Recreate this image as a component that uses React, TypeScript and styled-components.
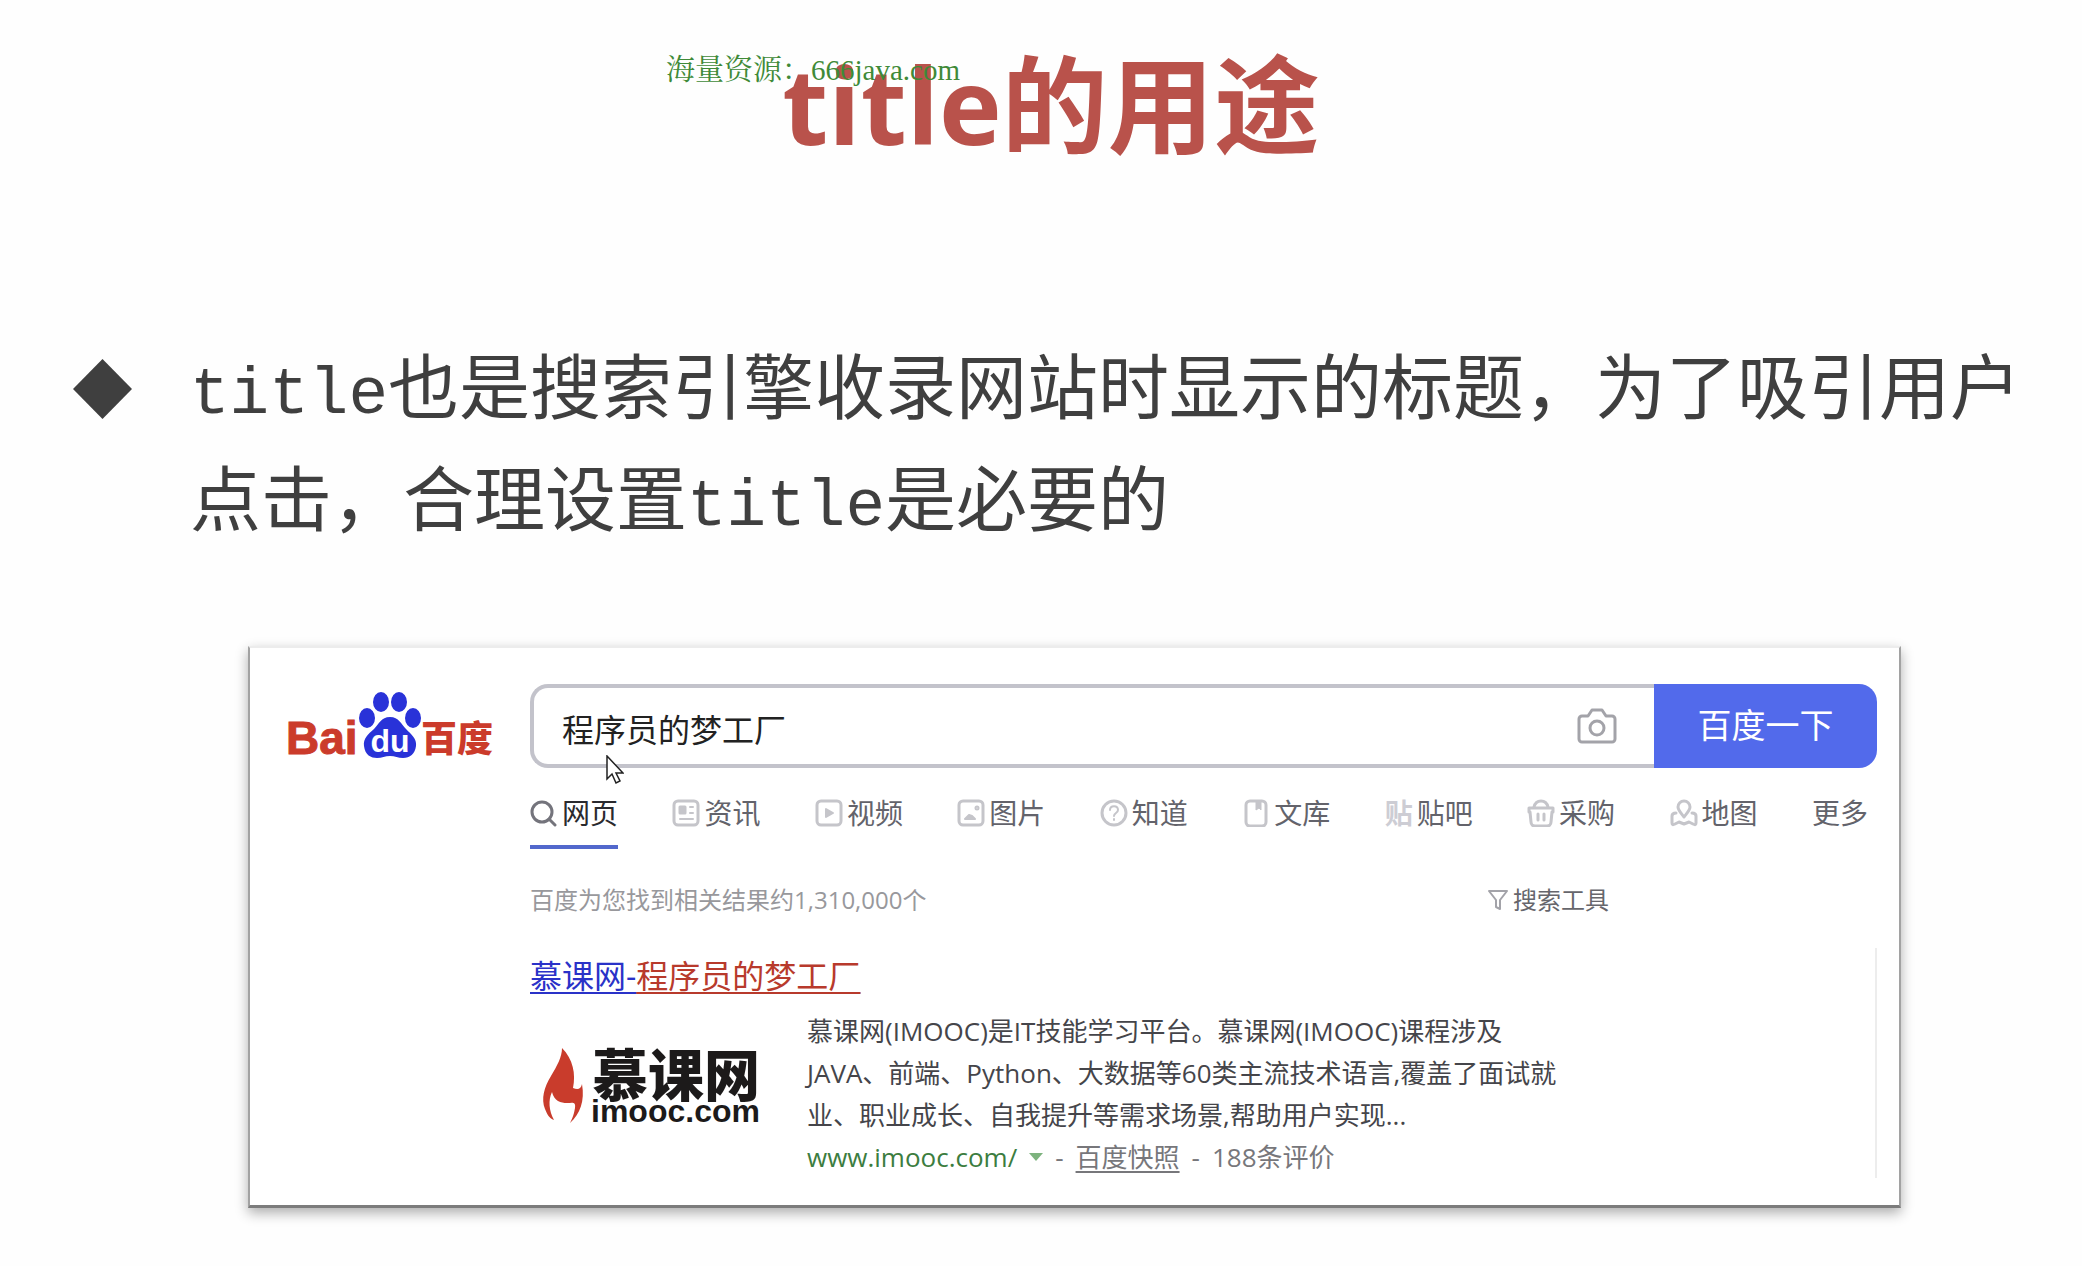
import React, { useState } from "react";
import styled, { createGlobalStyle } from "styled-components";

const GlobalStyle = createGlobalStyle`
  *, *::before, *::after { box-sizing: border-box; }
  body { margin: 0; background: #fefefe; }
  button, input { font: inherit; }
`;

const sans = `"Open Sans", "Noto Sans CJK SC", sans-serif`;

const Slide = styled.main`
  position: relative;
  padding: 44px 0 56px;
  font-family: ${sans};
  color: #3f3f3f;
`;

const Watermark = styled.p`
  position: absolute;
  top: 50px;
  left: 666px;
  margin: 0;
  font: 29px/40px "Liberation Serif", "Noto Serif CJK SC", "Noto Sans CJK SC", serif;
  color: #3f8a38;
  white-space: nowrap;
`;

const Title = styled.h1`
  margin: 0 0 0 20px;
  font-size: 106px;
  line-height: 120px;
  font-weight: 700;
  text-align: center;
  color: #b9524b;
`;

const Points = styled.ul`
  list-style: none;
  margin: 162px 0 0;
  padding: 0 48px 0 73px;
`;

const Point = styled.li`
  display: flex;
  align-items: flex-start;
  gap: 58px;
  font-size: 71px;
  line-height: 112px;
`;

const Diamond = styled.svg`
  flex: none;
  width: 59px;
  height: 60px;
  margin-top: 33px;
`;

const PointText = styled.p`
  margin: 0;
  white-space: nowrap;
  font-family: "Noto Sans CJK SC", sans-serif;
`;

const Code = styled.code`
  font-family: "Liberation Mono", monospace;
  font-size: 66px;
  line-height: 1;
`;

const Card = styled.section`
  position: relative;
  margin: 96px 181px 0 248px;
  padding: 36px 22px 27px 38px;
  background: #fff;
  border: 2px solid #a2a2a2;
  border-top-color: #ececec;
  border-bottom: 3px solid #7c7c7c;
  box-shadow: 0 5px 12px rgba(0, 0, 0, 0.32);
  display: grid;
  grid-template-columns: 208px minmax(0, 1fr);
  column-gap: 34px;
`;

const BaiduLogo = styled.svg`
  width: 208px;
  height: 78px;
  margin-top: 6px;
  overflow: visible;
`;

const Main = styled.div`
  min-width: 0;
`;

const SearchForm = styled.form`
  display: flex;
  height: 84px;
`;

const SearchBox = styled.div`
  flex: 1;
  display: flex;
  align-items: center;
  border: 4px solid #c3c3cb;
  border-right: 0;
  border-radius: 18px 0 0 18px;
  padding: 0 36px 0 28px;
`;

const SearchInput = styled.input`
  flex: 1;
  min-width: 0;
  border: 0;
  outline: 0;
  padding: 8px 0 0;
  background: none;
  font-size: 32px;
  line-height: 44px;
  color: #222;
`;

const IconButton = styled.button`
  border: 0;
  padding: 0;
  background: none;
  display: flex;
  color: #a3a3a9;
`;

const SubmitButton = styled.button`
  width: 223px;
  border: 0;
  border-radius: 0 18px 18px 0;
  padding: 0 0 6px;
  background: #526aeb;
  color: #fff;
  font-size: 34px;
`;

const Tabs = styled.nav`
  display: flex;
  justify-content: space-between;
  margin-top: 24px;
  padding-right: 9px;
`;

const Tab = styled.a<{ $active?: boolean }>`
  display: flex;
  align-items: center;
  justify-content: space-between;
  gap: 4px;
  height: 57px;
  padding-bottom: 11px;
  border-bottom: 4px solid ${(p) => (p.$active ? "#5268cc" : "transparent")};
  color: ${(p) => (p.$active ? "#2a2a2e" : "#63636b")};
  font-size: 28px;
  line-height: 40px;
  text-decoration: none;
`;

const TabIcon = styled.svg<{ $active?: boolean }>`
  width: 28px;
  height: 28px;
  color: ${(p) => (p.$active ? "#74747c" : "#c5c5ca")};
`;

const TabGlyph = styled.span`
  width: 28px;
  font-weight: 700;
  color: #cdcdd4;
`;

const Meta = styled.div`
  display: flex;
  justify-content: space-between;
  margin-top: 33px;
  padding-right: 268px;
  font-size: 24px;
  line-height: 36px;
  color: #98989c;
`;

const ToolButton = styled.button`
  display: flex;
  align-items: center;
  gap: 4px;
  border: 0;
  padding: 0;
  background: none;
  color: #66666c;
  line-height: 36px;
`;

const Result = styled.article`
  margin-top: 30px;
  border-right: 2px solid #ededed;
`;

const ResultTitle = styled.h2`
  margin: 0;
  font-size: 32px;
  line-height: 56px;
  font-weight: 400;
`;

const ResultLink = styled.a`
  color: #2a32c8;
  text-decoration: underline;
  text-decoration-thickness: 2px;
  text-underline-offset: 4px;
`;

const Match = styled.em`
  font-style: normal;
  color: #b83a2c;
  text-decoration: underline;
  text-decoration-thickness: 2px;
  text-underline-offset: 4px;
`;

const ResultBody = styled.div`
  display: grid;
  grid-template-columns: 241px minmax(0, 1fr);
  column-gap: 36px;
  margin-top: 6px;
`;

const ImoocLogo = styled.svg`
  width: 241px;
  height: 90px;
  margin-top: 34px;
  overflow: visible;
`;

const Description = styled.p`
  margin: 0;
  font-size: 26px;
  line-height: 42px;
  color: #45454a;
  white-space: nowrap;
`;

const Source = styled.p`
  display: flex;
  align-items: center;
  gap: 12px;
  margin: 0;
  font-size: 26px;
  line-height: 42px;
  color: #77777b;
  white-space: nowrap;
`;

const SiteLink = styled.a`
  color: #3c7d40;
  text-decoration: none;
`;

const SnapshotLink = styled.a`
  color: #77777b;
  text-underline-offset: 4px;
`;

const Pointer = styled.svg`
  position: absolute;
  top: 107px;
  left: 356px;
  width: 18px;
  height: 30px;
`;

const strokeProps = {
  fill: "none",
  stroke: "currentColor",
  strokeWidth: 3,
  strokeLinecap: "round" as const,
  strokeLinejoin: "round" as const,
};

const tabs: { label: string; icon?: React.ReactNode; glyph?: string }[] = [
  {
    label: "网页",
    icon: (
      <>
        <circle cx="12" cy="13" r="10" />
        <path d="M19 20l6 6" />
      </>
    ),
  },
  {
    label: "资讯",
    icon: (
      <>
        <rect x="2" y="2" width="24" height="24" rx="4" />
        <rect x="8" y="8" width="5" height="6" fill="currentColor" />
        <path d="M18 8h3M18 14h3M8 20h13" strokeWidth="2" />
      </>
    ),
  },
  {
    label: "视频",
    icon: (
      <>
        <rect x="2" y="2" width="24" height="24" rx="4" />
        <path d="M11 10v8l7-4z" fill="currentColor" strokeWidth="2" />
      </>
    ),
  },
  {
    label: "图片",
    icon: (
      <>
        <rect x="2" y="2" width="24" height="24" rx="4" />
        <path d="M8 20l4-4 3 1 3 3z" fill="currentColor" strokeWidth="2" />
        <circle cx="20" cy="9" r="1" />
      </>
    ),
  },
  {
    label: "知道",
    icon: (
      <>
        <circle cx="14" cy="14" r="12" />
        <path d="M10 11c0-5 8-5 8 0 0 3-4 3-4 6M14 20v1" strokeWidth="2" />
      </>
    ),
  },
  {
    label: "文库",
    icon: (
      <>
        <rect x="4" y="2" width="20" height="25" rx="4" />
        <path d="M14 3v8l3-2 2 2V3" fill="currentColor" strokeWidth="1" />
      </>
    ),
  },
  { label: "贴吧", glyph: "贴" },
  {
    label: "采购",
    icon: (
      <>
        <path d="M2 9h24v4h-1l-1 10a4 4 0 0 1-4 4H8a4 4 0 0 1-4-4L3 13H2z" />
        <path d="M7 8c2-8 12-8 14 0M11 15v6M17 15v6" />
      </>
    ),
  },
  {
    label: "地图",
    icon: (
      <>
        <path d="M14 18c-4-5-6-7-6-10a6 6 0 0 1 12 0c0 3-2 5-6 10z" />
        <path d="M6 14c-3 0-4 1-4 3v7c0 2 1 2 3 1l4-2 5 2 5-2 4 2c2 1 3 1 3-1v-7c0-2-1-3-4-3" />
      </>
    ),
  },
];

export default function App() {
  const [query, setQuery] = useState("程序员的梦工厂");

  return (
    <>
      <GlobalStyle />
      <Slide lang="zh-CN">
        <Title>title的用途</Title>
        <Watermark>海量资源：666java.com</Watermark>

        <Points>
          <Point>
            <Diamond viewBox="0 0 59 60" aria-hidden="true">
              <path d="M29.500 0L59 30 29.500 60 0 30z" fill="#3f3f3f" />
            </Diamond>
            <PointText>
              <Code>title</Code>也是搜索引擎收录网站时显示的标题，为了吸引用户
              <br />
              点击，合理设置<Code>title</Code>是必要的
            </PointText>
          </Point>
        </Points>

        <Card>
          <BaiduLogo viewBox="0 0 208 78" role="img" aria-label="Baidu 百度">
            <text x="-2" y="64" fontFamily="Liberation Sans, sans-serif" fontWeight="700" fontSize="46" fill="#cb3b2b" stroke="#cb3b2b">
              Bai
            </text>
            <g fill="#2932d8">
              <ellipse cx="79" cy="28" rx="8" ry="10" />
              <ellipse cx="93" cy="12" rx="8" ry="10" />
              <ellipse cx="111" cy="12" rx="8" ry="10" />
              <ellipse cx="125" cy="28" rx="8" ry="10" />
              <path d="M102 27c-9 0-11 7-16 12-6 5-11 10-10 17 1 9 7 12 13 12 5 0 8-2 13-2s8 2 13 2c7 0 12-4 13-12 1-7-5-12-10-17-5-5-7-12-16-12z" />
            </g>
            <text x="102" y="62" textAnchor="middle" fontFamily="Liberation Sans, sans-serif" fontWeight="700" fontSize="32" fill="#fff">
              du
            </text>
            <text x="133" y="62" fontFamily="Noto Sans CJK SC, sans-serif" fontWeight="900" fontSize="36" fill="#cb3b2b">
              百度
            </text>
          </BaiduLogo>

          <Main>
            <SearchForm role="search" onSubmit={(e) => e.preventDefault()}>
              <SearchBox>
                <SearchInput aria-label="搜索" value={query} onChange={(e) => setQuery(e.target.value)} />
                <IconButton type="button" aria-label="图片搜索">
                  <svg width="42" height="38" viewBox="0 0 42 38" {...strokeProps}>
                    <path d="M6 9h6l4-6h10l4 6h6a3 3 0 0 1 3 3v20a3 3 0 0 1-3 3H6a3 3 0 0 1-3-3V12a3 3 0 0 1 3-3z" />
                    <circle cx="21" cy="21" r="7" />
                  </svg>
                </IconButton>
              </SearchBox>
              <SubmitButton type="submit">百度一下</SubmitButton>
            </SearchForm>

            <Tabs>
              {tabs.map((tab, i) => (
                <Tab key={tab.label} href="#" $active={i === 0}>
                  {tab.glyph ? (
                    <TabGlyph aria-hidden="true">{tab.glyph}</TabGlyph>
                  ) : (
                    <TabIcon viewBox="0 0 28 28" {...strokeProps} $active={i === 0} aria-hidden="true">
                      {tab.icon}
                    </TabIcon>
                  )}
                  {tab.label}
                </Tab>
              ))}
              <Tab href="#">更多</Tab>
            </Tabs>

            <Meta>
              <span>百度为您找到相关结果约1,310,000个</span>
              <ToolButton type="button">
                <svg width="22" height="24" viewBox="0 0 22 24" {...strokeProps} strokeWidth={2} stroke="#a3a3a9" aria-hidden="true">
                  <path d="M2 3h18l-7 9v9l-4-2v-7z" />
                </svg>
                搜索工具
              </ToolButton>
            </Meta>

            <Result>
              <ResultTitle>
                <ResultLink href="#">
                  慕课网-<Match>程序员的梦工厂</Match>
                </ResultLink>
              </ResultTitle>
              <ResultBody>
                <ImoocLogo viewBox="0 0 241 90" role="img" aria-label="慕课网 imooc.com">
                  <path
                    d="M32 4c0 9-5 18-11 28-7 11-10 23-6 33 2 5 4 9 9 11-5-9-6-20-2-28 2 9 9 11 15 11 5 0 9-2 8 5-1 6-2 9-5 15 10-9 15-22 12-39-1 5-4 6-9 4 3-14 0-29-11-40z"
                    fill="#c93c2c"
                  />
                  <text x="62" y="52" fontFamily="Noto Sans CJK SC, sans-serif" fontWeight="900" fontSize="56" fill="#1c1a1a">
                    慕课网
                  </text>
                  <text x="61" y="78" fontFamily="Liberation Sans, sans-serif" fontWeight="700" fontSize="32" fill="#1c1a1a">
                    imooc.com
                  </text>
                </ImoocLogo>
                <div>
                  <Description>
                    慕课网(IMOOC)是IT技能学习平台。慕课网(IMOOC)课程涉及
                    <br />
                    JAVA、前端、Python、大数据等60类主流技术语言,覆盖了面试就
                    <br />
                    业、职业成长、自我提升等需求场景,帮助用户实现...
                  </Description>
                  <Source>
                    <SiteLink href="#">www.imooc.com/</SiteLink>
                    <svg width="14" height="8" viewBox="0 0 14 8" aria-hidden="true">
                      <path d="M0 0h14L7 8z" fill="#7db37e" />
                    </svg>
                    <span>-</span>
                    <SnapshotLink href="#">百度快照</SnapshotLink>
                    <span>-</span>
                    <span>188条评价</span>
                  </Source>
                </div>
              </ResultBody>
            </Result>
          </Main>

          <Pointer viewBox="0 0 18 30" aria-hidden="true">
            <path d="M1 1v23l5-5 4 9 4-2-4-8h7z" fill="#fff" stroke="#222" strokeWidth="1.500" />
          </Pointer>
        </Card>
      </Slide>
    </>
  );
}
